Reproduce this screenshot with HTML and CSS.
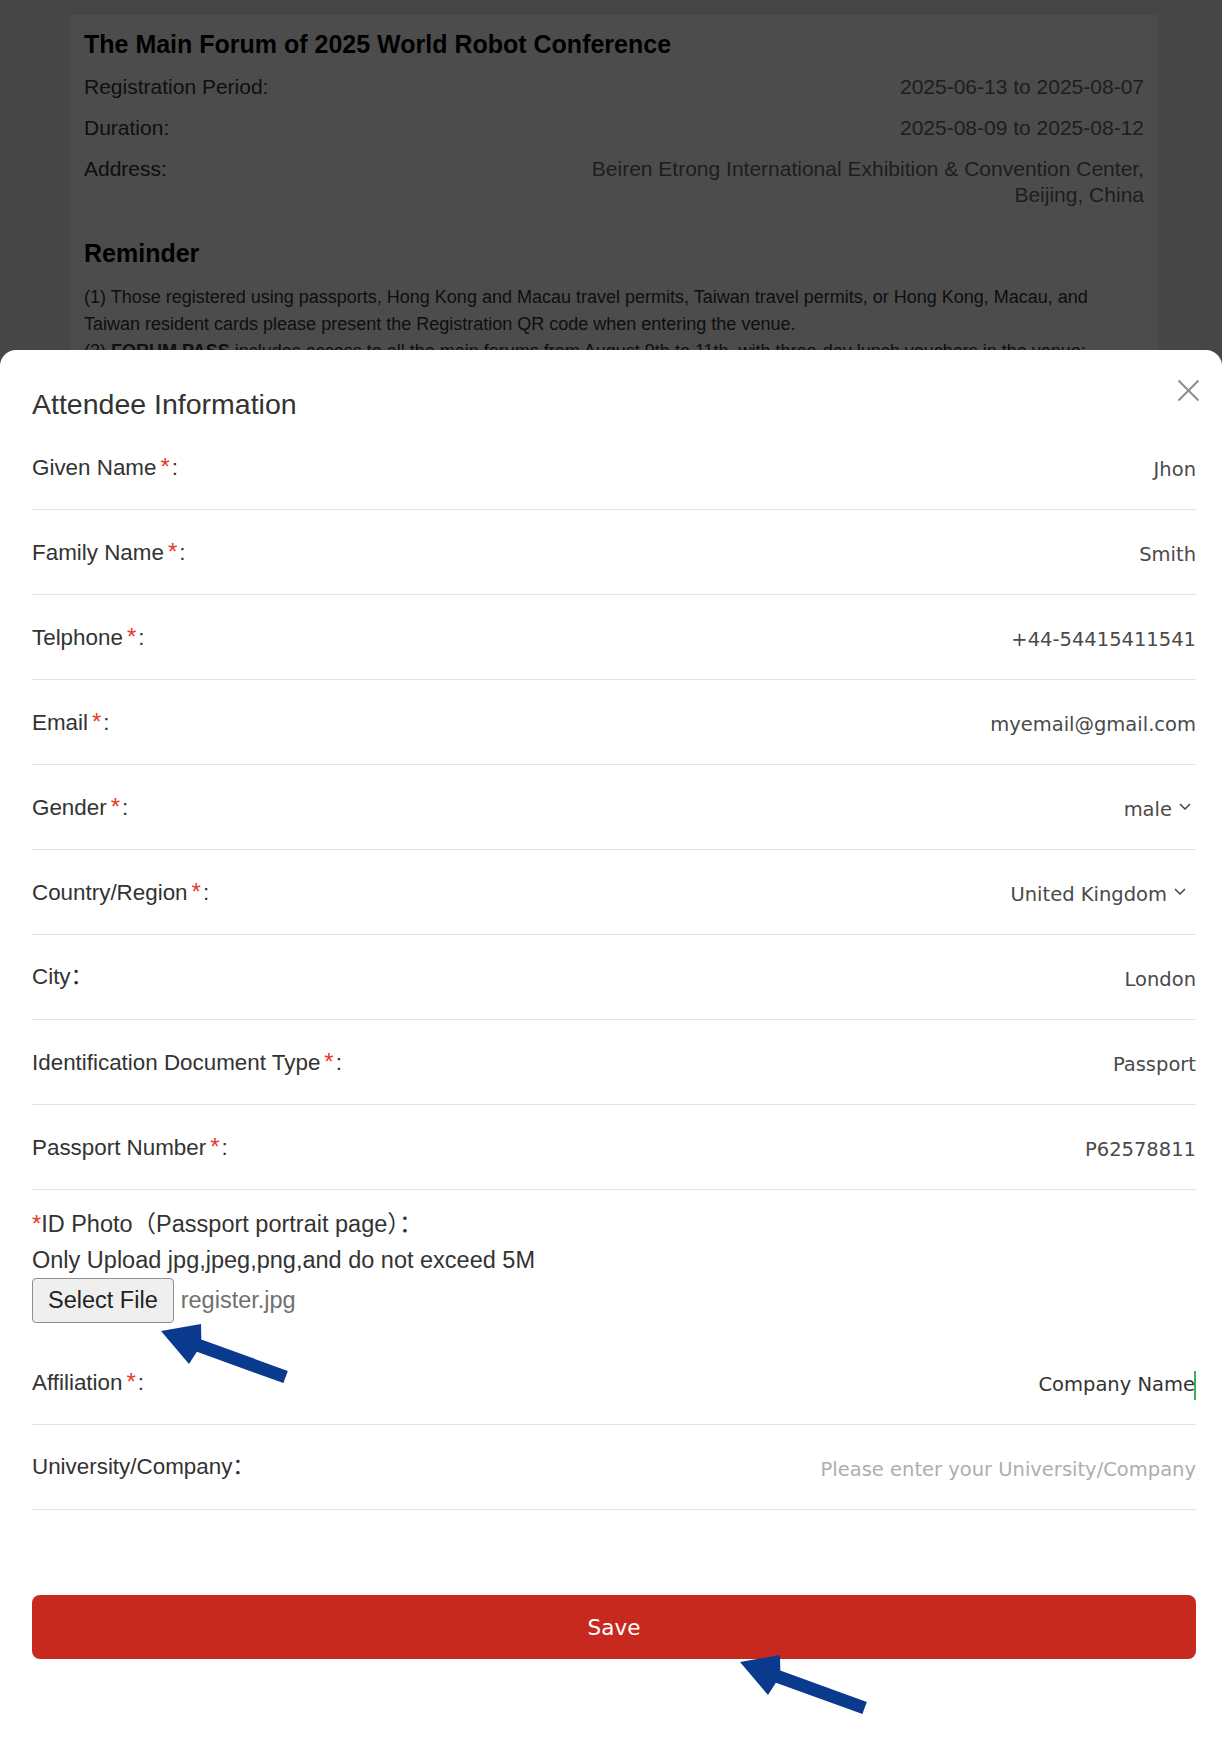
FILE: index.html
```html
<!DOCTYPE html>
<html lang="en">
<head>
<meta charset="utf-8">
<title>Attendee Information</title>
<link rel="stylesheet" href="styles.css">
</head>
<body>
<div class="page">
  <div class="event-card">
    <h1 class="event-title">The Main Forum of 2025 World Robot Conference</h1>
    <div class="info-row"><span class="info-label">Registration Period:</span><span class="info-value">2025-06-13 to 2025-08-07</span></div>
    <div class="info-row"><span class="info-label">Duration:</span><span class="info-value">2025-08-09 to 2025-08-12</span></div>
    <div class="info-row"><span class="info-label">Address:</span><span class="info-value">Beiren Etrong International Exhibition &amp; Convention Center,<br>Beijing, China</span></div>
    <h2 class="reminder-title">Reminder</h2>
    <p class="reminder">(1) Those registered using passports, Hong Kong and Macau travel permits, Taiwan travel permits, or Hong Kong, Macau, and Taiwan resident cards please present the Registration QR code when entering the venue.<br>(2) <b>FORUM PASS</b> includes access to all the main forums from August 9th to 11th, with three-day lunch vouchers in the venue;<br>(3) Please keep your registration information accurate.</p>
  </div>
</div>
<div class="mask"></div>
<div class="sheet">
  <div class="sheet-head">
    <h3 class="sheet-title">Attendee Information</h3>
    <button class="close" aria-label="close"><svg width="23" height="23" viewBox="0 0 23 23"><path d="M1.5 1.5 L21.5 21.5 M21.5 1.5 L1.5 21.5" stroke="#8c8c8c" stroke-width="2" fill="none"/></svg></button>
  </div>
  <div class="field"><span class="label">Given Name<i class="req">*</i>:</span><span class="value">Jhon</span></div>
  <div class="field"><span class="label">Family Name<i class="req">*</i>:</span><span class="value">Smith</span></div>
  <div class="field"><span class="label">Telphone<i class="req">*</i>:</span><span class="value">+44-54415411541</span></div>
  <div class="field"><span class="label">Email<i class="req">*</i>:</span><span class="value">myemail@gmail.com</span></div>
  <div class="field"><span class="label">Gender<i class="req">*</i>:</span><span class="value select">male<svg class="chev" width="12" height="7" viewBox="0 0 12 7"><path d="M1 1 L6 6 L11 1" stroke="#444" stroke-width="1.5" fill="none"/></svg></span></div>
  <div class="field"><span class="label">Country/Region<i class="req">*</i>:</span><span class="value select select-wide">United Kingdom<svg class="chev" width="12" height="7" viewBox="0 0 12 7"><path d="M1 1 L6 6 L11 1" stroke="#444" stroke-width="1.5" fill="none"/></svg></span></div>
  <div class="field"><span class="label">City：</span><span class="value">London</span></div>
  <div class="field"><span class="label">Identification Document Type<i class="req">*</i>:</span><span class="value">Passport</span></div>
  <div class="field"><span class="label">Passport Number<i class="req">*</i>:</span><span class="value">P62578811</span></div>
  <div class="upload">
    <p class="upload-line"><i class="req-lead">*</i>ID Photo（Passport portrait page）：</p>
    <p class="upload-line">Only Upload jpg,jpeg,png,and do not exceed 5M</p>
    <div class="file-row"><button class="file-btn">Select File</button><span class="file-name">register.jpg</span></div>
  </div>
  <div class="field"><span class="label">Affiliation<i class="req">*</i>:</span><span class="value typed">Company Name<span class="caret"></span></span></div>
  <div class="field"><span class="label">University/Company：</span><span class="value placeholder">Please enter your University/Company</span></div>
  <button class="save">Save</button>
</div>
<svg class="annotations" width="1222" height="1757" viewBox="0 0 1222 1757">
  <defs>
    <polygon id="arrow" points="161,1331 201,1324 201.3,1339.5 287.8,1370.9 283.4,1383.1 196.9,1351.7 189,1364" fill="#0a3a8e"/>
  </defs>
  <use href="#arrow"/>
  <use href="#arrow" transform="translate(579 331)"/>
</svg>
</body>
</html>
```
FILE: styles.css
```css
html, body {
  margin: 0;
  padding: 0;
}
body {
  width: 1222px;
  height: 1757px;
  overflow: hidden;
  background: #ececec;
  font-family: "Liberation Sans", Arial, "Noto Sans CJK SC", sans-serif;
  position: relative;
}

/* background page */
.page {
  padding: 15px 64px 0 70px;
}
.event-card {
  background: #fff;
  padding: 14px 14px 60px;
  height: 1700px;
  box-sizing: border-box;
}
.event-title {
  margin: 0;
  font-size: 25px;
  line-height: 30px;
  font-weight: bold;
  color: #000;
}
.info-row {
  display: flex;
  justify-content: space-between;
  margin-top: 15px;
  font-size: 21px;
  line-height: 26px;
}
.info-label {
  color: #333;
}
.info-value {
  color: #666;
  text-align: right;
}
.reminder-title {
  margin: 30px 0 0;
  font-size: 25px;
  line-height: 30px;
  font-weight: bold;
  color: #000;
}
.reminder {
  margin: 16px 0 0;
  font-size: 18px;
  line-height: 27px;
  color: #333;
}

.mask {
  position: fixed;
  inset: 0;
  background: rgba(0, 0, 0, 0.7);
}

/* bottom sheet */
.sheet {
  position: fixed;
  left: 0;
  right: 0;
  bottom: 0;
  height: 1407px;
  background: #fff;
  border-radius: 16px 16px 0 0;
  padding: 0 26px 0 32px;
  box-sizing: border-box;
  font-family: "Liberation Sans", Arial, "Noto Sans CJK SC", sans-serif;
}
.sheet-head {
  display: flex;
  justify-content: space-between;
  align-items: flex-start;
  height: 75px;
  padding-top: 29px;
  box-sizing: border-box;
}
.sheet-title {
  margin: 9px 0 0;
  font-size: 28.5px;
  line-height: 32px;
  font-weight: normal;
  color: #333;
}
.close {
  width: 23px;
  height: 23px;
  padding: 0;
  margin: 0 -4px 0 0;
  border: 0;
  background: none;
  display: block;
}
.close svg {
  display: block;
}

.field {
  display: flex;
  align-items: center;
  justify-content: space-between;
  height: 85px;
  box-sizing: border-box;
  border-bottom: 1px solid #e2e2e2;
}
.label {
  font-size: 22.4px;
  line-height: 30px;
  color: #333;
  white-space: nowrap;
}
.req {
  font-style: normal;
  font-size: 24px;
  color: #e8392b;
  margin: 0 2px 0 4px;
}
.value {
  font-family: "DejaVu Sans", Verdana, sans-serif;
  font-size: 19.5px;
  line-height: 30px;
  padding-top: 6px;
  color: #4a4a4a;
  text-align: right;
  white-space: nowrap;
}
.select {
  display: flex;
  align-items: center;
  gap: 7px;
  margin-right: 5px;
}
.select-wide {
  margin-right: 10px;
}
.chev {
  display: block;
  margin-top: -8px;
}
.typed {
  color: #333;
  display: flex;
  align-items: center;
}
.caret {
  display: inline-block;
  width: 2px;
  height: 29px;
  background: #3fae5a;
  margin-left: -1px;
}
.placeholder {
  color: #aeaeae;
}

.upload {
  padding: 16px 0 17px;
  font-size: 23.5px;
  line-height: 36px;
  color: #333;
}
.upload-line {
  margin: 0;
  white-space: nowrap;
}
.req-lead {
  font-style: normal;
  color: #e8392b;
}
.file-row {
  display: flex;
  align-items: center;
  height: 45px;
}
.file-btn {
  height: 45px;
  padding: 0 15px;
  border: 1px solid #8f8f8f;
  border-radius: 4px;
  background: #efefef;
  font-family: "Liberation Sans", Arial, sans-serif;
  font-size: 23.5px;
  color: #222;
  box-sizing: border-box;
}
.file-name {
  margin-left: 7px;
  color: #707070;
  line-height: 45px;
}

.save {
  display: block;
  width: 100%;
  height: 64px;
  margin-top: 85px;
  border: 0;
  border-radius: 8px;
  background: #c8291f;
  color: #fff;
  font-family: "DejaVu Sans", Verdana, sans-serif;
  font-size: 21.5px;
}

.annotations {
  position: absolute;
  left: 0;
  top: 0;
  pointer-events: none;
}
```
